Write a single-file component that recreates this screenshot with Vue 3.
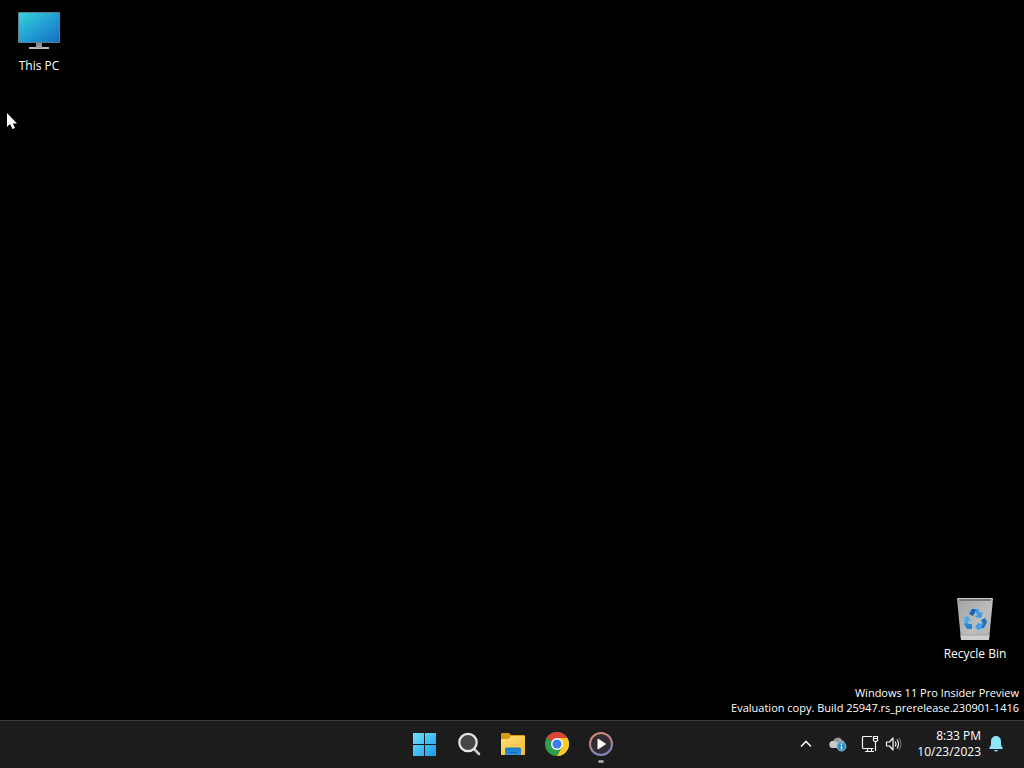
<template>
  <div class="screen">
    <main class="desktop">
      <button class="shortcut" type="button">
        <svg width="44" height="44" viewBox="0 0 44 44" aria-hidden="true">
          <defs>
            <linearGradient id="pcScreen" x1="0" y1="0" x2="1" y2="1">
              <stop offset="0" stop-color="#38d3dc" />
              <stop offset="0.5" stop-color="#229fd4" />
              <stop offset="1" stop-color="#1571c0" />
            </linearGradient>
          </defs>
          <rect x="1" y="4" width="42" height="31" rx="1" fill="#5d7f91" />
          <rect x="2" y="5" width="40" height="29" fill="url(#pcScreen)" />
          <rect x="19" y="35" width="6" height="5" fill="#8a8d90" />
          <path d="M12 39h20v2H12z" fill="#b9b9b9" />
          <path d="M19 38h6v2h-6z" fill="#9da0a2" />
        </svg>
        <span>This PC</span>
      </button>

      <div class="corner">
        <button class="shortcut" type="button">
          <svg width="44" height="44" viewBox="0 -1 44 44" aria-hidden="true">
            <defs>
              <linearGradient id="binBody" x1="0" y1="0" x2="1" y2="1">
                <stop offset="0" stop-color="#a2a3a4" />
                <stop offset="0.6" stop-color="#bcbdbe" />
                <stop offset="1" stop-color="#aeafb0" />
              </linearGradient>
            </defs>
            <path d="M4 2l1.500-1h33L40 2l-4 41H8z" fill="url(#binBody)" />
            <path d="M5.500 2h33l-1 2H6.500z" fill="#77797b" />
            <path d="M4 2l1-1h34l1 1-.2 1-1.800-1H6L4.200 3z" fill="#c6c7c8" />
            <path d="M7.600 38h28.800l-.5 5H8z" fill="#cfcecd" />
            <path d="M7.600 37.500h28.900v1H7.600z" fill="#a4a5a6" />
            <path d="M16 17l3-5h5l-4 7z" fill="#1c65b4" />
            <path d="M22 12h3l2.500 4 2.500-1-2 6-6-1 2.200-1.500z" fill="#3a9be8" />
            <path d="M28 23l4-2 2 4-3 6h-4l3-4z" fill="#1d70c4" />
            <path d="M29 26v6h-3v2l-4-4 4-5v2z" fill="#3d9fea" />
            <path d="M19 27v5h-5l-3-5 2-3 3 3z" fill="#2188dc" />
            <path d="M10 21l5-2 3 6-2.500-1-2.500 4-2-3 1-3z" fill="#4aa9ee" />
          </svg>
          <span>Recycle Bin</span>
        </button>
        <p class="watermark">
          Windows 11 Pro Insider Preview<br />
          Evaluation copy. Build 25947.rs_prerelease.230901-1416
        </p>
      </div>

      <svg class="pointer" width="12" height="18" viewBox="0 0 12 18" aria-hidden="true">
        <path d="M1 1v14l3-3 2.500 5 2.500-1L6.800 11.500H11z" fill="#fff" />
      </svg>
    </main>

    <footer class="taskbar">
      <nav class="apps" aria-label="Taskbar">
        <button type="button" aria-label="Start">
          <svg width="24" height="24" viewBox="0 0 24 24">
            <defs>
              <linearGradient id="startTiles" gradientUnits="userSpaceOnUse" x1="0" y1="0" x2="24" y2="24">
                <stop offset="0" stop-color="#72e0fa" />
                <stop offset="0.5" stop-color="#43bff4" />
                <stop offset="1" stop-color="#1698ec" />
              </linearGradient>
            </defs>
            <path d="M0 1h11v11H0zM12 1h11v11H12zM0 13h11v11H0zM12 13h11v11H12z" fill="url(#startTiles)" />
          </svg>
        </button>
        <button type="button" aria-label="Search">
          <svg width="24" height="24" viewBox="0 0 24 24">
            <path d="M17 17l5 5" stroke="#c9c9c9" stroke-width="2.600" stroke-linecap="round" />
            <circle cx="11" cy="10.500" r="8.700" fill="#464646" stroke="#e6e6e6" stroke-width="2.200" />
          </svg>
        </button>
        <button type="button" aria-label="File Explorer">
          <svg width="26" height="24" viewBox="0 0 26 24">
            <defs>
              <linearGradient id="folderFront" x1="0" y1="0" x2="1" y2="1">
                <stop offset="0" stop-color="#ffe17a" />
                <stop offset="1" stop-color="#f2bb31" />
              </linearGradient>
              <linearGradient id="folderBase" x1="0" y1="0" x2="0" y2="1">
                <stop offset="0" stop-color="#1c79c9" />
                <stop offset="1" stop-color="#2c93dc" />
              </linearGradient>
            </defs>
            <path d="M1 2q0-1 1-1h7l2 2h13q1 0 1 1v5H1z" fill="#d79b12" />
            <path d="M1 7h7.500L11 4h13q1 0 1 1v17q0 1-1 1H2q-1 0-1-1z" fill="url(#folderFront)" />
            <path d="M5 23v-6q0-1.500 1.500-1.500h13q1.500 0 1.500 1.500v6z" fill="url(#folderBase)" />
            <path d="M9 20h8v1H9z" fill="#1463ad" />
          </svg>
        </button>
        <button type="button" aria-label="Google Chrome">
          <svg width="24" height="24" viewBox="0 0 24 24">
            <circle cx="12" cy="12" r="12" fill="#2f9e4c" />
            <path d="M12 12L1.600 6A12 12 0 0 1 22.400 6z" fill="#dd4336" />
            <path d="M12 6h10.400A12 12 0 0 1 12 24l5.200-9z" fill="#fbc925" />
            <circle cx="12" cy="12" r="6" fill="#fff" />
            <circle cx="12" cy="12" r="4.600" fill="#3b7ded" />
          </svg>
        </button>
        <button class="running" type="button" aria-label="Media Player">
          <svg width="24" height="24" viewBox="0 0 24 24">
            <defs>
              <linearGradient id="playerRing" x1="0" y1="0" x2="0.300" y2="1">
                <stop offset="0" stop-color="#d98a68" />
                <stop offset="0.500" stop-color="#b98494" />
                <stop offset="1" stop-color="#8089bd" />
              </linearGradient>
            </defs>
            <circle cx="12" cy="12" r="11" fill="#302c32" stroke="url(#playerRing)" stroke-width="2" />
            <path d="M9 7v10l7.500-5z" fill="#fff" stroke="#fff" stroke-linejoin="round" />
          </svg>
        </button>
      </nav>

      <div class="tray">
        <button class="chevron" type="button" aria-label="Show hidden icons">
          <svg width="12" height="12" viewBox="0 0 12 12">
            <path d="M1 8.500l5-5 5 5" fill="none" stroke="#f2f2f2" stroke-width="1.600" />
          </svg>
        </button>
        <button class="cloud" type="button" aria-label="OneDrive">
          <svg width="18" height="16" viewBox="0 0 18 16">
            <path d="M4 12a3.500 3.500 0 0 1 0-7 5 5 0 0 1 9-1q3 1 3 4v4z" fill="#999" />
            <path d="M4 5q4 0 7 4l-3 3H4a3.500 3.500 0 0 1 0-7z" fill="#c9c9c9" />
            <circle cx="12.500" cy="10.500" r="4.500" fill="#2f8dbd" stroke="#74c6ea" />
            <path d="M12.500 7.500v1.500M12.500 10v3.500" stroke="#fff" stroke-width="1.400" />
          </svg>
        </button>
        <button class="status" type="button" aria-label="Network and volume">
          <svg width="18" height="18" viewBox="0 0 18 18">
            <path
              d="M11 1.500H2.500q-1 0-1 1v10q0 1 1 1H12.500M6.500 13.500v3M10.500 13.500v3M4 16.500h9M12.500 1.500h4v4l-1 1h-2l-1-1zM12.500 3.500h4M14.500 6.500v9.500"
              fill="none" stroke="#f2f2f2" stroke-width="1.200"
            />
          </svg>
          <svg width="18" height="18" viewBox="0 0 18 18">
            <path d="M1.500 7h3l3.500-4v12l-3.500-4h-3z" fill="none" stroke="#f2f2f2" stroke-width="1.200" stroke-linejoin="round" />
            <path d="M10 6.500q2 2.500 0 5M12 4.500q3 4.500 0 9" fill="none" stroke="#e8e8e8" stroke-width="1.200" />
            <path d="M14 3q4 6 0 12" fill="none" stroke="#777" />
          </svg>
        </button>
        <button class="clock" type="button">
          <time datetime="2023-10-23T20:33">8:33 PM<br />10/23/2023</time>
          <svg width="14" height="16" viewBox="0 0 14 16" aria-hidden="true">
            <path d="M7 0a5 5 0 0 1 5 5v4l1.700 3q.3 1-.7 1H1q-1 0-.7-1L2 9V5a5 5 0 0 1 5-5zM5 14h4q-.4 1.500-2 1.500T5 14z" fill="#8fe3fb" />
          </svg>
        </button>
      </div>
    </footer>
  </div>
</template>

<script setup>
</script>

<style>
body {
  margin: 0;
  background: #000;
}
</style>

<style scoped>
.screen {
  display: flex;
  flex-direction: column;
  min-height: 100vh;
  color: #fff;
  background: #000;
  font-family: "Open Sans", "Noto Sans", sans-serif;
  font-size: 12px;
  line-height: 16px;
}

button {
  padding: 0;
  border: none;
  background: none;
  color: inherit;
  font: inherit;
}

svg {
  display: block;
  flex: none;
}

.desktop {
  position: relative;
  flex: 1;
  display: flex;
  justify-content: space-between;
  align-items: flex-start;
  padding: 8px 5px 5px 0;
}

.shortcut {
  display: flex;
  flex-direction: column;
  align-items: center;
  gap: 6px;
  width: 78px;
}

.corner {
  align-self: flex-end;
  display: flex;
  flex-direction: column;
  align-items: flex-end;
  gap: 23px;
}

.corner .shortcut {
  margin-right: 5px;
}

.watermark {
  margin: 0;
  text-align: right;
  font-size: 11px;
  line-height: 15px;
}

.pointer {
  position: absolute;
  left: 6px;
  top: 112px;
}

.taskbar {
  display: grid;
  grid-template-columns: 1fr auto 1fr;
  align-items: center;
  height: 45px;
  padding-bottom: 2px;
  border-top: 1px solid #3a3a3a;
  background: #1c1c1c;
}

.apps {
  grid-column: 2;
  display: flex;
  padding-left: 2px;
}

.apps button {
  position: relative;
  display: flex;
  align-items: center;
  justify-content: center;
  width: 44px;
  height: 44px;
}

.running::after {
  content: "";
  position: absolute;
  left: 19px;
  bottom: 3px;
  width: 6px;
  height: 3px;
  border-radius: 2px;
  background: #9a9a9a;
}

.tray {
  display: flex;
  align-items: center;
  justify-content: flex-end;
  padding-right: 21px;
}

.chevron {
  margin-right: 17px;
}

.cloud {
  margin-right: 14px;
}

.status {
  display: flex;
  gap: 6px;
  margin-right: 14px;
}

.clock {
  display: flex;
  align-items: center;
  gap: 8px;
  text-align: right;
}
</style>
